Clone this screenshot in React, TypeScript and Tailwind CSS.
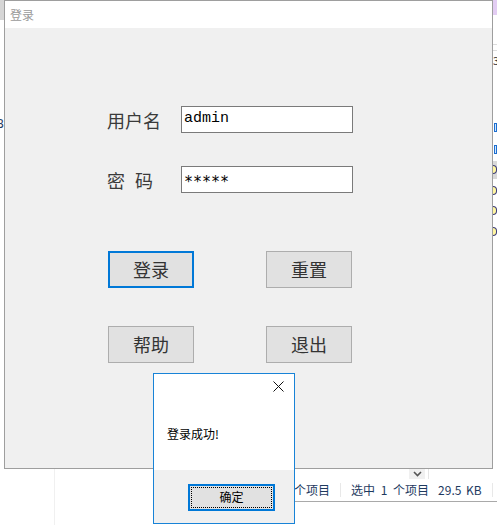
import React from "react";

// Swing-style login window with a message dialog, over a file explorer
function ExplorerBackdrop() {
  return (
    <div className="absolute inset-0 bg-white">
      {/* left edge of the explorer behind */}
      <div className="absolute left-0 top-0 w-[4px] h-[20px] bg-[#d6d6d6]" />
      <span className="absolute left-[-4px] top-[118px] text-[12px] leading-none text-[#1e3a5f] font-['Noto_Sans',sans-serif]">
        B
      </span>
      <div className="absolute left-[54px] top-[469px] w-px h-[56px] bg-[#f0f0f0]" />

      {/* right edge: file list fragments */}
      <div className="absolute right-0 top-0 w-[4px] h-[15px] bg-[#e3cdf3]" />
      <div className="absolute right-0 top-[44px] w-[4px] h-px bg-[#dcdcdc]" />
      <div className="absolute right-0 top-[50px] w-[4px] h-px bg-[#dcdcdc]" />
      <span className="absolute left-[493px] top-[55px] text-[11px] leading-none text-[#333]">3</span>
      <div className="absolute left-[494px] top-[123px] w-[3px] h-[9px] border border-[#1e6fd0] bg-[#cfe6ff]" />
      <div className="absolute left-[494px] top-[145px] w-[3px] h-[9px] border border-[#1e6fd0] bg-[#cfe6ff]" />
      <div className="absolute left-[493px] top-[161px] w-[4px] h-[18px] bg-[#d9d9d9]" />
      {[165, 186, 206, 227].map((y) => (
        <div
          key={y}
          className="absolute left-[493px] w-[4px] h-[9px] rounded-r-full border border-l-0 border-[#3b3b7a] bg-[#fff6a0]"
          style={{ top: y }}
        />
      ))}

      {/* scroll chevron and status bar */}
      <div className="absolute left-[409px] top-[469px] w-[16px] h-[10px] bg-[#f0f0f0] flex items-center justify-center">
        <svg width="9" height="6" viewBox="0 0 9 6">
          <path d="M1 1l3.5 3.5L8 1" fill="none" stroke="#555" strokeWidth="1.6" />
        </svg>
      </div>
      <div className="absolute left-[428px] top-[469px] w-px h-[10px] bg-[#e5e5e5]" />
      <div className="absolute left-[293px] top-[480px] right-0 h-[20px] flex items-center text-[12px] text-[#1e3a5f] font-['Noto_Sans_CJK_SC',sans-serif]">
        <span className="pl-[1px]">个项目</span>
        <span className="mx-[10px] w-px h-[14px] bg-[#e8e8e8]" />
        <span className="[word-spacing:3px]">选中 1 个项目</span>
        <span className="ml-[9px] [word-spacing:2px]">29.5 KB</span>
        <span className="ml-[10px] w-px h-[14px] bg-[#e8e8e8]" />
      </div>
      <div className="absolute left-[293px] top-[501px] right-0 h-px bg-[#a9a9a9]" />
    </div>
  );
}

function FormButton({ label, focused }: { label: string; focused?: boolean }) {
  return (
    <button
      className={
        focused
          ? "w-[86px] h-[37px] border-2 border-[#0078d7] bg-[#e1e1e1] text-[18px] text-[#333]"
          : "w-[86px] h-[37px] border border-[#adadad] bg-[#e1e1e1] text-[18px] text-[#333]"
      }
    >
      {label}
    </button>
  );
}

function LoginWindow() {
  return (
    <div className="absolute left-[4px] top-0 w-[489px] h-[469px] border border-[#9e9e9e] flex flex-col bg-[#f0f0f0]">
      <div className="h-[27px] bg-white pl-[5px] flex items-center text-[12px] text-[#9a9a9a]">
        登录
      </div>
      <div className="flex-1 pl-[102px] pt-[78px] flex flex-col">
        <div className="flex items-center h-[27px]">
          <span className="w-[74px] text-[18px] text-[#3a3a3a] leading-none">用户名</span>
          <div className="w-[172px] h-[27px] border border-[#7a7a7a] bg-white flex items-center pl-[2px] font-['Liberation_Mono',monospace] text-[15px] text-black">
            admin
          </div>
        </div>
        <div className="flex items-center h-[27px] mt-[33px]">
          <span className="w-[74px] flex gap-[10px] text-[18px] text-[#3a3a3a] leading-none">
            <span>密</span>
            <span>码</span>
          </span>
          <div className="w-[172px] h-[27px] border border-[#7a7a7a] bg-white flex items-center pl-[2px] font-['DejaVu_Sans_Mono',monospace] text-[15px] text-black">
            <span className="relative top-[3px] tracking-[0px]">*****</span>
          </div>
        </div>
        <div className="flex gap-[72px] mt-[58px] pl-[1px]">
          <FormButton label="登录" focused />
          <FormButton label="重置" />
        </div>
        <div className="flex gap-[72px] mt-[38px] pl-[1px]">
          <FormButton label="帮助" />
          <FormButton label="退出" />
        </div>
      </div>
    </div>
  );
}

function MessageDialog() {
  return (
    <div className="absolute left-[153px] top-[373px] w-[142px] h-[151px] border border-[#1883d7] bg-white flex flex-col">
      <div className="h-[30px] flex justify-end items-start pt-[7px] pr-[10px]">
        <svg width="11" height="11" viewBox="0 0 11 11">
          <path d="M0.5 0.5l10 10M10.5 0.5l-10 10" stroke="#111" strokeWidth="1" />
        </svg>
      </div>
      <div className="flex-1 pl-[13px] pt-[24px] text-[12px] text-black leading-none">
        登录成功!
      </div>
      <div className="h-[53px] bg-[#f0f0f0] pl-[34px] pt-[13px]">
        <button className="w-[87px] h-[27px] border-2 border-[#0078d7] bg-[#e1e1e1] p-[1px]">
          <div className="h-full border border-dotted border-black flex items-center justify-center text-[12px] text-black">
            确定
          </div>
        </button>
      </div>
    </div>
  );
}

export default function App() {
  return (
    <div className="relative w-[497px] h-[525px] overflow-hidden font-['Noto_Sans_CJK_SC',sans-serif]">
      <ExplorerBackdrop />
      <LoginWindow />
      <MessageDialog />
    </div>
  );
}
